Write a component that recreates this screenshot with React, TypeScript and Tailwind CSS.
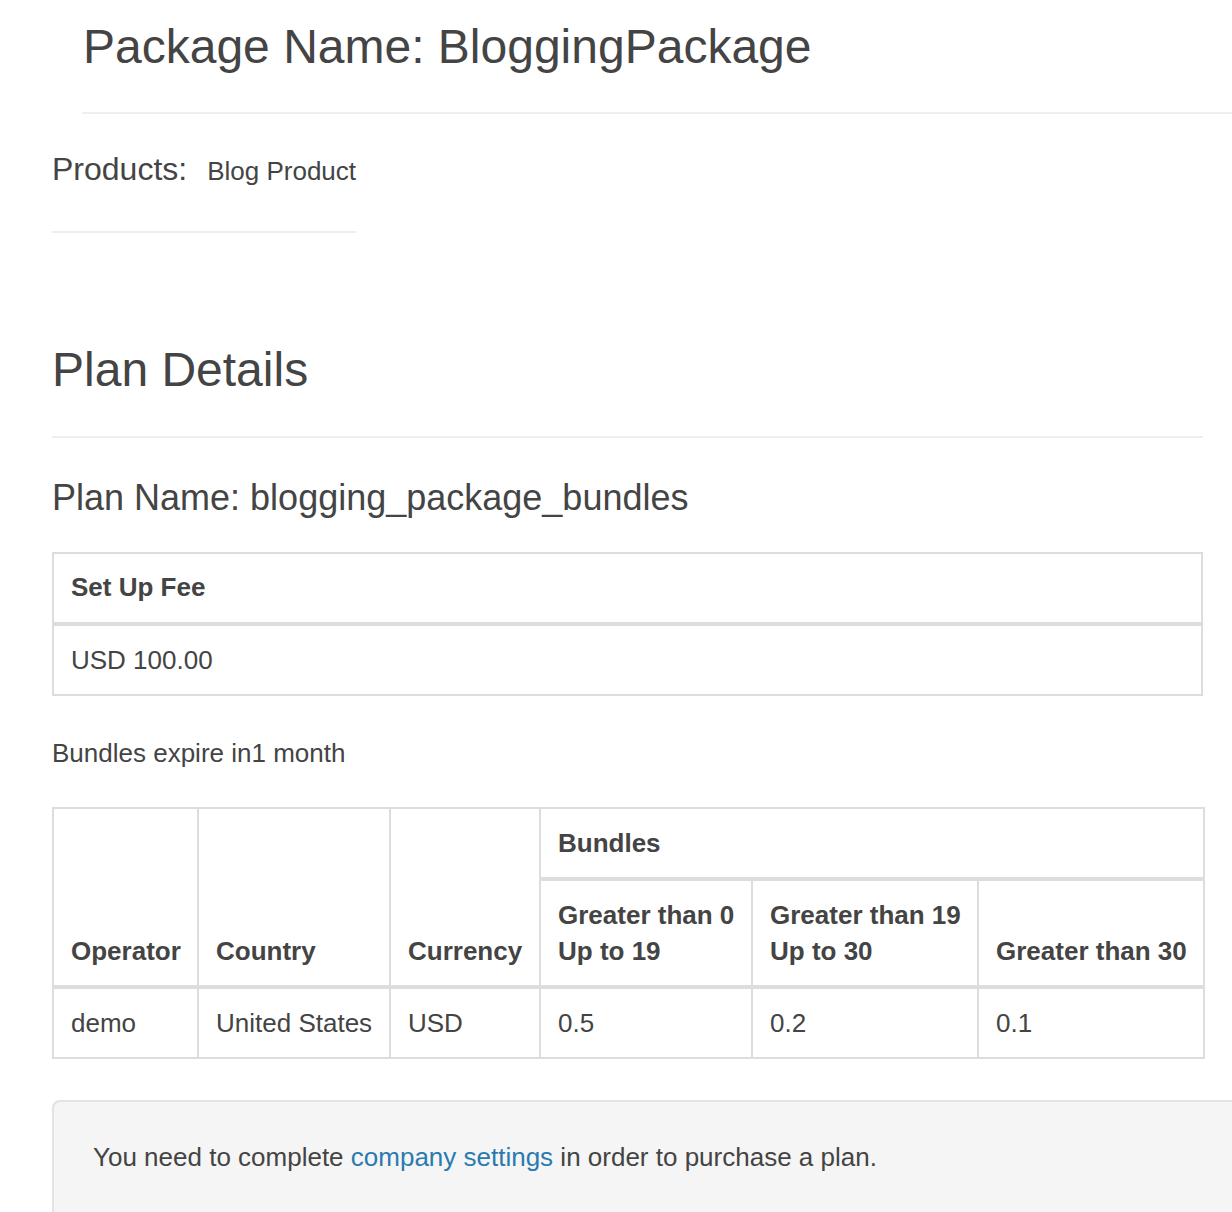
export default function App() {
  const tiers = [
    { head: ['Greater than 0', 'Up to 19'], value: '0.5' },
    { head: ['Greater than 19', 'Up to 30'], value: '0.2' },
    { head: ['Greater than 30'], value: '0.1' },
  ];

  return (
    <div className="min-h-screen w-[1232px] overflow-hidden bg-white font-['Liberation_Sans',Arial,sans-serif] text-[#444]">
      {/* Package header */}
      <div className="ml-[82px] border-b-2 border-[#eee] pt-[20px] pb-[39px]">
        <h1 className="pl-[1px] text-[48px] leading-[53px] font-normal">Package Name: BloggingPackage</h1>
      </div>

      <div className="pl-[52px]">
        {/* Products */}
        <div className="mt-[37px] flex w-fit items-baseline gap-[20px] border-b-2 border-[#eee] pb-[42px]">
          <span className="text-[32px] leading-[36px]">Products:</span>
          <span className="text-[26px] leading-[36px]">Blog Product</span>
        </div>

        {/* Plan details */}
        <h2 className="mt-[110px] w-[1151px] border-b-2 border-[#eee] pb-[40px] text-[48px] leading-[53px] font-normal">
          Plan Details
        </h2>
        <h3 className="mt-[40px] text-[36px] leading-[40px] font-normal">Plan Name: blogging_package_bundles</h3>

        <table className="mt-[34px] w-[1151px] border-collapse border-2 border-[#ddd] text-left text-[26px] leading-[36px]">
          <thead>
            <tr>
              <th className="border-2 border-b-4 border-[#ddd] px-[17px] pt-[15px] pb-[17px] align-bottom font-bold">Set Up Fee</th>
            </tr>
          </thead>
          <tbody>
            <tr>
              <td className="border-2 border-[#ddd] px-[17px] py-[16px]">USD 100.00</td>
            </tr>
          </tbody>
        </table>

        <p className="mt-[39px] text-[26px] leading-[36px]">Bundles expire in1 month</p>

        <table className="mt-[36px] w-[1151px] table-fixed border-collapse border-2 border-[#ddd] text-left text-[26px] leading-[36px]">
          <colgroup>
            <col className="w-[145px]" />
            <col className="w-[192px]" />
            <col className="w-[150px]" />
            <col className="w-[212px]" />
            <col className="w-[226px]" />
            <col className="w-[226px]" />
          </colgroup>
          <thead>
            <tr>
              <th rowSpan={2} className="border-2 border-b-4 border-[#ddd] px-[17px] py-[16px] align-bottom font-bold">Operator</th>
              <th rowSpan={2} className="border-2 border-b-4 border-[#ddd] px-[17px] py-[16px] align-bottom font-bold">Country</th>
              <th rowSpan={2} className="border-2 border-b-4 border-[#ddd] px-[17px] py-[16px] align-bottom font-bold">Currency</th>
              <th colSpan={3} className="border-2 border-b-4 border-[#ddd] px-[17px] py-[16px] align-bottom font-bold">Bundles</th>
            </tr>
            <tr>
              {tiers.map((t) => (
                <th key={t.value} className="border-2 border-b-4 border-[#ddd] px-[17px] py-[16px] align-bottom font-bold whitespace-nowrap">
                  {t.head.map((line) => (
                    <div key={line}>{line}</div>
                  ))}
                </th>
              ))}
            </tr>
          </thead>
          <tbody>
            <tr>
              <td className="border-2 border-[#ddd] px-[17px] py-[16px]">demo</td>
              <td className="border-2 border-[#ddd] px-[17px] py-[16px] whitespace-nowrap">United States</td>
              <td className="border-2 border-[#ddd] px-[17px] py-[16px]">USD</td>
              {tiers.map((t) => (
                <td key={t.value} className="border-2 border-[#ddd] px-[17px] py-[16px]">{t.value}</td>
              ))}
            </tr>
          </tbody>
        </table>

        {/* Notice */}
        <div className="mt-[41px] rounded-l-lg border-2 border-r-0 border-[#e3e3e3] bg-[#f5f5f5] px-[39px] py-[37px] text-[26px] leading-[36px]">
          You need to complete <a href="#" className="text-[#2a7ab0]">company settings</a> in order to purchase a plan.
          <div className="h-[40px]" />
        </div>
      </div>
    </div>
  );
}
